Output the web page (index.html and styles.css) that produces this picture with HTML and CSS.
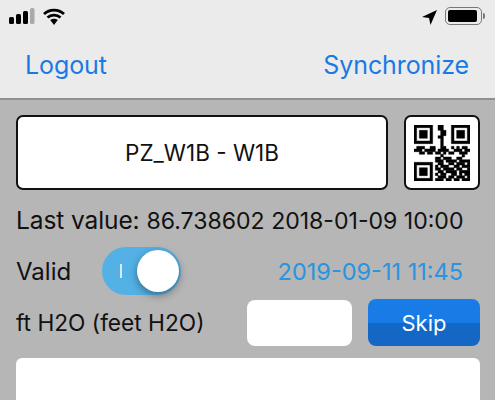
FILE: index.html
```html
<!DOCTYPE html>
<html lang="en">
<head>
    <meta charset="UTF-8">
    <meta name="viewport" content="width=device-width, initial-scale=1.0">
    <title>Reading</title>
    <link rel="stylesheet" href="styles.css">
</head>
<body>
    <header class="top">
        <div class="status">
            <div class="status-left">
                <svg width="26" height="17" viewBox="0 0 26 17">
                    <rect x="0" y="9" width="5" height="7" rx="1.5" fill="#000"/>
                    <rect x="7" y="6" width="5" height="10" rx="1.5" fill="#000"/>
                    <rect x="14" y="3" width="5" height="13" rx="1.5" fill="#000"/>
                    <rect x="21" y="0" width="4.500" height="16" rx="1.5" fill="#aaa"/>
                </svg>
                <svg width="22" height="17" viewBox="0 0 22 17">
                    <path d="M1 6C6.500 .7 15.500 .7 21 6" fill="none" stroke="#000" stroke-width="2.800"/>
                    <path d="M4.500 9.600C8 6.300 14 6.300 17.500 9.600" fill="none" stroke="#000" stroke-width="2.800"/>
                    <path d="M7.200 12L11 17L14.800 12C12.500 10.300 9.500 10.300 7.200 12Z" fill="#000"/>
                </svg>
            </div>
            <div class="status-right">
                <svg class="arrow" width="15" height="15" viewBox="0 0 15 15">
                    <path d="M15 0L0 7L7 8L8.500 15Z" fill="#000"/>
                </svg>
                <div class="battery"><div class="battery-level"></div></div>
                <div class="battery-cap"></div>
            </div>
        </div>
        <nav class="nav">
            <a class="nav-link">Logout</a>
            <a class="nav-link">Synchronize</a>
        </nav>
    </header>

    <main class="content">
        <div class="picker">
            <div class="picker-name">PZ_W1B - W1B</div>
            <div class="picker-qr">
                <svg class="qr" width="56" height="56" viewBox="0 0 21 21">
                    <path d="M0 0h7v7H0zM1 1v5h5V1zM2 2h3v3H2z" fill-rule="evenodd"/>
                    <path d="M14 0h7v7h-7zM15 1v5h5V1zM16 2h3v3h-3z" fill-rule="evenodd"/>
                    <path d="M0 14h7v7H0zM1 15v5h5v-5zM2 16h3v3H2z" fill-rule="evenodd"/>
                    <path d="M9 0h2v2H9zM10 2h2v2h-2zM9 4h2v1H9zM10 5h1v3h-1z"/>
                    <path d="M1 8h3v1H1zM6 8h2v1H6zM10 8h2v1h-2zM14 8h1v1h-1zM16 8h1v1h-1zM18 8h2v1h-2z"/>
                    <path d="M0 9h3v1H0zM4 9h4v1H4zM9 9h4v1H9zM15 9h3v1h-3zM19 9h2v1h-2z"/>
                    <path d="M2 10h2v1H2zM5 10h2v1H5zM8 10h2v1H8zM11 10h1v1h-1zM13 10h2v1h-2zM17 10h3v1h-3z"/>
                    <path d="M10 11h1v1h-1zM18 11h1v1h-1zM8 12h2v1H8zM11 12h3v1h-3zM16 12h2v1h-2z"/>
                    <path d="M8 13h3v1H8zM12 13h4v1h-4zM17 13h4v1h-4z"/>
                    <path d="M9 14h2v1H9zM13 14h2v1h-2zM16 14h3v1h-3zM20 14h1v1h-1z"/>
                    <path d="M8 15h1v1H8zM10 15h3v1h-3zM15 15h2v1h-2zM18 15h3v1h-3z"/>
                    <path d="M8 16h2v1H8zM11 16h4v1h-4zM16 16h2v1h-2zM20 16h1v1h-1z"/>
                    <path d="M9 17h2v1H9zM12 17h4v1h-4zM17 17h4v1h-4z"/>
                    <path d="M8 18h1v1H8zM10 18h2v1h-2zM14 18h2v1h-2zM17 18h1v1h-1zM19 18h2v1h-2z"/>
                    <path d="M9 19h3v1H9zM13 19h2v1h-2zM16 19h3v1h-3zM20 19h1v1h-1z"/>
                    <path d="M8 20h3v1H8zM12 20h2v1h-2zM15 20h2v1h-2zM18 20h3v1h-3z"/>
                </svg>
            </div>
        </div>

        <div class="last-value">
            <span class="last-label">Last value:</span>
            <span class="last-number">86.738602 2018-01-09 10:00</span>
        </div>

        <div class="valid-row">
            <div class="valid-left">
                <span class="valid-label">Valid</span>
                <div class="toggle">
                    <span class="toggle-mark"></span>
                    <span class="toggle-knob"></span>
                </div>
            </div>
            <span class="stamp">2019-09-11 11:45</span>
        </div>

        <div class="entry-row">
            <span class="unit">ft H2O (feet H2O)</span>
            <div class="entry-controls">
                <div class="entry-input"></div>
                <button class="skip">Skip</button>
            </div>
        </div>

        <div class="notes"></div>
    </main>
</body>
</html>
```

FILE: styles.css
```css
html, body {
    margin: 0;
    height: 400px;
    overflow: hidden;
}

body {
    font-family: Inter, "Liberation Sans", sans-serif;
    background-color: #b6b6b6;
    color: #111;
}

.top {
    height: 98px;
    background-color: #ebebeb;
    border-bottom: 2px solid #8f8f8f;
}

.status {
    display: flex;
    justify-content: space-between;
    height: 28px;
    padding: 7px 10px 0 9px;
}

.status-left {
    display: flex;
    gap: 8px;
    padding-top: 1px;
}

.status-right {
    display: flex;
    align-items: flex-start;
    gap: 8px;
}

.arrow {
    margin-top: 3px;
}

.battery {
    box-sizing: border-box;
    width: 37px;
    height: 18px;
    padding: 2px 4px 2px 2px;
    border: 1.5px solid #777;
    border-radius: 5px;
}

.battery-level {
    height: 100%;
    background-color: #000;
    border-radius: 2px;
}

.battery-cap {
    width: 2px;
    height: 6px;
    margin: 6px 0 0 -7px;
    background-color: #777;
    border-radius: 0 2px 2px 0;
}

.nav {
    display: flex;
    justify-content: space-between;
    padding: 15px 26px 0 25px;
}

.nav-link {
    font-size: 25px;
    letter-spacing: -0.1px;
    color: #1a7ae4;
}

.content {
    padding: 15px 15px 0 16px;
}

.picker {
    display: flex;
    gap: 16px;
    height: 75px;
}

.picker-name {
    flex: 1;
    display: flex;
    align-items: center;
    justify-content: center;
    background-color: #fff;
    border: 2px solid #111;
    border-radius: 7px;
    font-size: 22.5px;
}

.picker-qr {
    display: flex;
    align-items: center;
    justify-content: center;
    width: 76px;
    box-sizing: border-box;
    background-color: #fff;
    border: 2px solid #111;
    border-radius: 7px;
}

/* modules bleed a little so the code reads as heavy as the original */
.qr path {
    fill: #000;
    stroke: #000;
    stroke-width: 0.16;
}

.last-value {
    display: flex;
    gap: 7px;
    align-items: baseline;
    margin-top: 16px;
    line-height: 28px;
    white-space: nowrap;
}

.last-label {
    font-size: 24.5px;
    letter-spacing: -0.1px;
}

.last-number {
    font-size: 23.05px;
}

.valid-row {
    display: flex;
    justify-content: space-between;
    align-items: center;
    height: 50px;
    margin-top: 11px;
}

.valid-left {
    display: flex;
    align-items: center;
    gap: 31px;
}

.valid-label {
    font-size: 24px;
}

.toggle {
    position: relative;
    width: 79px;
    height: 48px;
    background-color: #54b1e6;
    border-radius: 24px;
}

.toggle-mark {
    position: absolute;
    left: 18px;
    top: 17px;
    width: 2px;
    height: 14px;
    background-color: #d7eefa;
}

.toggle-knob {
    position: absolute;
    right: 2px;
    top: 3px;
    width: 42px;
    height: 42px;
    background-color: #fff;
    border-radius: 50%;
    box-shadow: 0 3px 8px rgba(0, 0, 0, 0.4);
}

.stamp {
    margin-right: 17px;
    font-size: 23.5px;
    color: #2a94e0;
}

.entry-row {
    display: flex;
    justify-content: space-between;
    align-items: center;
    margin-top: 3px;
}

.unit {
    font-size: 22.7px;
}

.entry-controls {
    display: flex;
    align-items: center;
    gap: 16px;
}

.entry-input {
    width: 105px;
    height: 46px;
    background-color: #fff;
    border-radius: 8px;
}

.skip {
    width: 112px;
    height: 47px;
    padding: 0;
    font: 22px Inter, "Liberation Sans", sans-serif;
    color: #fff;
    background: linear-gradient(#187be6 50%, #1467c4 50%);
    border: none;
    border-radius: 8px;
}

.notes {
    height: 60px;
    margin-top: 12px;
    background-color: #fff;
    border-radius: 6px 6px 0 0;
}
```
